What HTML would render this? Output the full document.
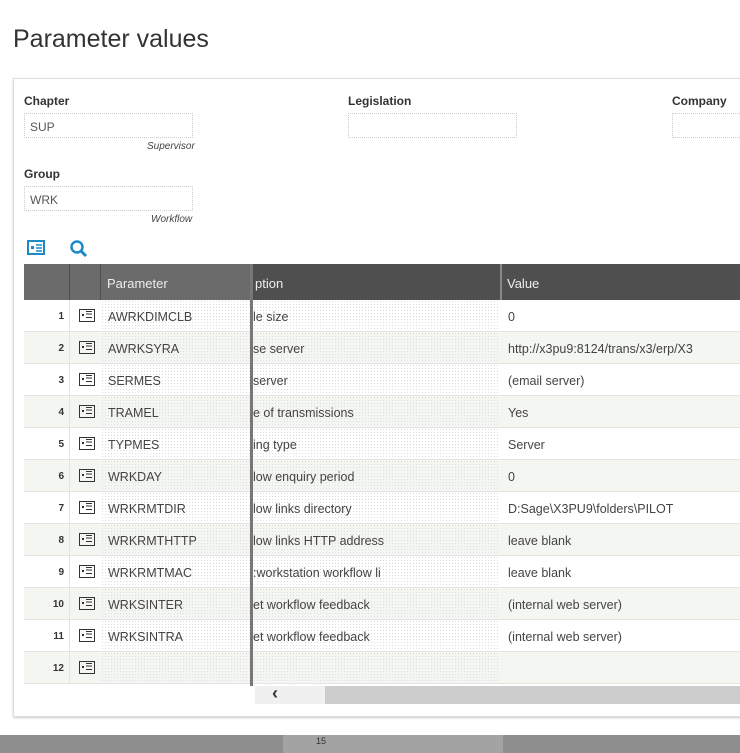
<html><head><style>
body{margin:0;width:740px;height:753px;background:#fff;font-family:"Liberation Sans",sans-serif;position:relative;overflow:hidden}
.a{position:absolute}
h1{position:absolute;left:13px;top:25px;margin:0;font-weight:normal;font-size:25px;color:#333}
.lbl{font-size:12px;font-weight:bold;color:#333}
.inp{border:1px dotted #ccc;height:25px;box-sizing:border-box;font-size:12px;color:#555;padding:6px 5px}
.sub{font-size:10px;font-style:italic;color:#444}
.row{position:absolute;left:24px;width:716px;height:32px;border-bottom:1px solid #e4e4e4;box-sizing:border-box;font-size:12.5px;color:#444}
.row div{position:absolute;top:0;height:31px;line-height:34px}
.n{left:0;width:40px;text-align:right;font-size:10px;font-weight:bold;color:#333}
.ic{left:55px;top:9px!important;width:14px!important;height:11px!important;border:1.5px solid #333;line-height:normal!important}
.ic:before{content:"";position:absolute;left:2px;top:4px;width:2px;height:2px;background:#333}
.ic:after{content:"";position:absolute;left:6px;top:1px;width:6px;height:5px;border-top:1.5px solid #333;border-bottom:1.5px solid #333;box-shadow:inset 0 2px 0 -0.5px #fff,inset 0 2.5px 0 #333}
.dots{background-image:radial-gradient(#ddd 0.6px,transparent 0.7px);background-size:3px 3px}
</style></head><body>
<h1>Parameter values</h1>
<div class="a" style="left:13px;top:78px;width:740px;height:637px;border:1px solid #ddd;box-shadow:0 1px 2px #ccc"></div>
<div class="a lbl" style="left:24px;top:94px">Chapter</div>
<div class="a inp" style="left:24px;top:113px;width:169px">SUP</div>
<div class="a sub" style="left:147px;top:141px">Supervisor</div>
<div class="a lbl" style="left:348px;top:94px">Legislation</div>
<div class="a inp" style="left:348px;top:113px;width:169px"></div>
<div class="a lbl" style="left:672px;top:94px">Company</div>
<div class="a inp" style="left:672px;top:113px;width:80px"></div>
<div class="a lbl" style="left:24px;top:167px">Group</div>
<div class="a inp" style="left:24px;top:186px;width:169px">WRK</div>
<div class="a sub" style="left:151px;top:214px">Workflow</div>
<svg class="a" style="left:27px;top:240px" width="20" height="16"><rect x="1" y="1" width="16" height="13" fill="none" stroke="#1a8bc6" stroke-width="2"/><rect x="4" y="6" width="3" height="3" fill="#1a8bc6"/><line x1="9" y1="5" x2="15" y2="5" stroke="#1a8bc6" stroke-width="1.5"/><line x1="9" y1="8" x2="15" y2="8" stroke="#1a8bc6" stroke-width="1.5"/><line x1="9" y1="11" x2="15" y2="11" stroke="#1a8bc6" stroke-width="1.5"/></svg>
<svg class="a" style="left:69px;top:239px" width="20" height="20"><circle cx="8" cy="8" r="5.5" fill="none" stroke="#1a8bc6" stroke-width="2.5"/><line x1="12" y1="12" x2="17" y2="17" stroke="#1a8bc6" stroke-width="3"/></svg>
<div class="a" style="left:24px;top:264px;width:716px;height:36px;background:#4f4f4f"></div>
<div class="a" style="left:24px;top:264px;width:45px;height:36px;background:#6b6b6b"></div>
<div class="a" style="left:70px;top:264px;width:30px;height:36px;background:#6b6b6b"></div>
<div class="a" style="left:101px;top:264px;width:149px;height:36px;background:#6b6b6b;color:#eee;font-size:13px;line-height:40px;padding-left:6px;box-sizing:border-box">Parameter</div>
<div class="a" style="left:255px;top:264px;color:#eee;font-size:13px;line-height:40px">ption</div>
<div class="a" style="left:500px;top:264px;width:2px;height:36px;background:#888"></div>
<div class="a" style="left:507px;top:264px;color:#eee;font-size:13px;line-height:40px">Value</div>
<div id="rows"></div>
<div class="a" style="left:250px;top:264px;width:3px;height:422px;background:#777"></div>
<div class="a" style="left:255px;top:686px;width:485px;height:18px;background:#f0f0f0"></div>
<div class="a" style="left:325px;top:686px;width:415px;height:18px;background:#cdcdcd"></div>
<div class="a" style="left:272px;top:683px;font-size:18px;font-weight:bold;color:#333">‹</div>
<div class="a" style="left:0;top:735px;width:740px;height:18px;background:#8e8e8e"></div>
<div class="a" style="left:283px;top:735px;width:220px;height:18px;background:#a3a3a3"></div>
<div class="a" style="left:316px;top:736px;font-size:9px;color:#333">15</div>
<script>
var d=[["AWRKDIMCLB","le size","0"],["AWRKSYRA","se server","http://x3pu9:8124/trans/x3/erp/X3"],["SERMES","server","(email server)"],["TRAMEL","e of transmissions","Yes"],["TYPMES","ing type","Server"],["WRKDAY","low enquiry period","0"],["WRKRMTDIR","low links directory","D:Sage\\X3PU9\\folders\\PILOT"],["WRKRMTHTTP","low links HTTP address","leave blank"],["WRKRMTMAC",":workstation workflow li","leave blank"],["WRKSINTER","et workflow feedback","(internal web server)"],["WRKSINTRA","et workflow feedback","(internal web server)"],["","",""]];
var h="";d.forEach(function(r,i){h+='<div class="row" style="top:'+(300+i*32)+'px;background:'+(i%2?'#f3f6f1':'#fff')+'"><div class="n">'+(i+1)+'</div><div style="left:45px;width:1px;background:#e4e4e4"></div><div class="ic"></div><div class="dots" style="left:77px;width:149px;padding-left:7px;box-sizing:border-box">'+r[0]+'</div><div class="dots" style="left:229px;width:247px">'+r[1]+'</div><div style="left:484px">'+r[2]+'</div></div>'});
document.getElementById("rows").innerHTML=h;
</script>
</body></html>
